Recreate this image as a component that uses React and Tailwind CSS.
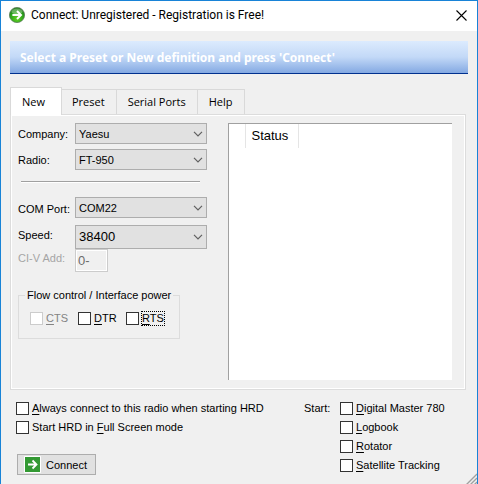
import { useState } from 'react'

const TABS = ['New', 'Preset', 'Serial Ports', 'Help']

const START_APPS = [
    { key: 'D', rest: 'igital Master 780' },
    { key: 'L', rest: 'ogbook' },
    { key: 'R', rest: 'otator' },
    { key: 'S', rest: 'atellite Tracking' },
]

function Select({ id, options, className }) {
    return (
        <div className="relative">
            <select
                id={id}
                className={`block w-full appearance-none border border-[#adadad] bg-[#e1e1e1] pl-[3px] pr-5 outline-none ${className}`}
            >
                {options.map(o => <option key={o}>{o}</option>)}
            </select>
            <svg className="pointer-events-none absolute right-1 top-1/2 -translate-y-1/2" width="10" height="6" viewBox="0 0 10 6" fill="none" stroke="#606060" strokeWidth="1.2">
                <path d="M1 0.8 L5 4.8 L9 0.8" />
            </svg>
        </div>
    )
}

function Check({ before = '', hotkey, after, disabled, focused }) {
    return (
        <label className={`flex h-[15px] items-center gap-0.5 whitespace-nowrap ${disabled ? 'text-[#838383]' : ''}`}>
            <input
                type="checkbox"
                disabled={disabled}
                className={`size-[13px] shrink-0 appearance-none border bg-white checked:bg-[#333333] ${disabled ? 'border-[#cccccc]' : 'border-[#333333]'}`}
            />
            <span className={`border border-dotted leading-[13px] ${focused ? 'border-black' : 'border-transparent'}`}>
                {before}<span className="underline underline-offset-2">{hotkey}</span>{after}
            </span>
        </label>
    )
}

export default function App() {
    const [tab, setTab] = useState('New')

    return (
        <div className="relative border border-[#1883d7] bg-[#f0f0f0] font-['Liberation_Sans',sans-serif] text-[11px] leading-[14px] text-black">
            {/* Title bar */}
            <div className="flex h-[30px] items-center bg-white pb-0.5 pl-2 pr-2.5">
                <svg width="16" height="16" viewBox="0 0 16 16">
                    <defs>
                        <radialGradient id="orb" cx="50%" cy="75%" r="75%">
                            <stop offset="0" stopColor="#5fd023" />
                            <stop offset="0.6" stopColor="#2ba01c" />
                            <stop offset="1" stopColor="#197315" />
                        </radialGradient>
                    </defs>
                    <circle cx="8" cy="8" r="7.6" fill="url(#orb)" stroke="#5d7f5a" strokeWidth="0.8" />
                    <ellipse cx="8" cy="4.5" rx="5.5" ry="3" fill="#ffffff" opacity="0.3" />
                    <path d="M3.4 8 H11.6 M8 4 L12 8 L8 12" fill="none" stroke="#ffffff" strokeWidth="2" />
                </svg>
                <h1 className="ml-1.5 flex-1 font-['Roboto',sans-serif] text-[12px]">Connect: Unregistered - Registration is Free!</h1>
                <button aria-label="Close">
                    <svg width="11" height="11" viewBox="0 0 11 11" stroke="#000000" strokeWidth="1.1">
                        <path d="M0.5 0.5 L10.5 10.5 M10.5 0.5 L0.5 10.5" />
                    </svg>
                </button>
            </div>

            <div className="px-[9px] pt-2.5">
                <div className="flex h-[33px] items-center border-b border-[#00308f] bg-gradient-to-b from-[#dcebfe] via-[#c3d9f7] to-[#84a9e2] px-2.5 pt-0.5 font-['Noto_Sans',sans-serif] text-[12px] font-bold text-white">
                    Select a Preset or New definition and press 'Connect'
                </div>

                {/* Tabs */}
                <div className="mr-0.5 mt-[13px] flex h-[27px] items-end font-['Open_Sans',sans-serif]">
                    {TABS.map(t => (
                        <button
                            key={t}
                            onClick={() => setTab(t)}
                            className={t === tab
                                ? 'relative -mb-px -mr-px h-7 border border-b-0 border-[#d9d9d9] bg-white pl-[11px] pr-4'
                                : 'h-[25px] border border-b-0 border-l-0 border-[#d9d9d9] px-[11px]'}
                        >
                            {t}
                        </button>
                    ))}
                </div>

                <div className="mr-0.5 border border-[#dcdcdc]">
                    <div className="flex border border-white pb-2 pl-1.5 pr-3 pt-[7px]">
                        <div className="w-[210px] shrink-0">
                            <div className="grid grid-cols-[57px_132px] gap-y-[5px]">
                                <label htmlFor="company" className="pt-1">Company:</label>
                                <Select id="company" options={['Yaesu', 'Icom', 'Kenwood']} className="h-[21px]" />
                                <label htmlFor="radio" className="pt-1">Radio:</label>
                                <Select id="radio" options={['FT-950', 'FT-2000']} className="h-[21px]" />
                            </div>

                            <hr className="ml-[3px] mt-[11px] w-[179px] border-b border-t border-b-white border-t-[#a0a0a0]" />

                            <div className="mt-3.5 grid grid-cols-[57px_132px]">
                                <label htmlFor="port" className="pt-[5px]">COM Port:</label>
                                <Select id="port" options={['COM22', 'COM1']} className="h-[21px]" />
                                <label htmlFor="speed" className="pt-2.5">Speed:</label>
                                <div className="pt-[7px]">
                                    <Select id="speed" options={['38400', '19200', '9600']} className="h-6 text-[13px]" />
                                </div>
                                <label htmlFor="civ" className="pt-0.5 text-[#a5a5a5]">CI-V Add:</label>
                                <input
                                    id="civ"
                                    defaultValue="0-"
                                    disabled
                                    className="h-[23px] w-[33px] border border-[#cccccc] bg-[#f0f0f0] pl-0.5 text-[13px] text-[#6d6d6d] shadow-[inset_0_0_0_1px_#ffffff]"
                                />
                            </div>

                            <fieldset className="mt-4 h-[51px] w-[162px] border border-[#dcdcdc] pl-[11px]">
                                <legend className="-ml-[5px] whitespace-nowrap px-0.5">Flow control / Interface power</legend>
                                <div className="flex pt-[9px]">
                                    <div className="w-12"><Check hotkey="C" after="TS" disabled /></div>
                                    <div className="w-12"><Check hotkey="D" after="TR" /></div>
                                    <div className="w-12"><Check hotkey="R" after="TS" focused /></div>
                                </div>
                            </fieldset>
                        </div>

                        {/* Status list */}
                        <div className="min-h-[257px] flex-1 border-l border-t border-[#a0a0a0] bg-white">
                            <table className="text-[13px]">
                                <thead>
                                    <tr className="h-6">
                                        <th className="w-4 border-r border-[#e5e5e5]"></th>
                                        <th className="w-[53px] border-r border-[#e5e5e5] pl-1.5 text-left font-normal">Status</th>
                                    </tr>
                                </thead>
                            </table>
                        </div>
                    </div>
                </div>
            </div>

            <div className="flex justify-between pb-2.5 pl-[15px] pt-[11px]">
                <div>
                    <div className="space-y-1">
                        <Check hotkey="A" after="lways connect to this radio when starting HRD" />
                        <Check before="Start HRD in " hotkey="F" after="ull Screen mode" />
                    </div>
                    <button className="ml-px mt-[19px] flex h-[21px] w-[79px] items-center gap-[5px] border border-[#adadad] bg-[#e1e1e1] pl-1.5">
                        <svg width="17" height="17" viewBox="0 0 17 17">
                            <rect width="17" height="17" rx="1" fill="#ffffff" />
                            <rect x="1" y="1" width="15" height="15" fill="#339933" />
                            <path d="M4 8.5 H12 M8.5 4.5 L12.5 8.5 L8.5 12.5" fill="none" stroke="#ffffff" strokeWidth="1.8" />
                        </svg>
                        Connect
                    </button>
                </div>
                <div className="flex w-[173px]">
                    <span className="w-9">Start:</span>
                    <div className="space-y-1">
                        {START_APPS.map(a => <Check key={a.key} hotkey={a.key} after={a.rest} />)}
                    </div>
                </div>
            </div>

            {/* Resize grip */}
            <svg className="absolute bottom-0 right-0" width="12" height="12" viewBox="0 0 12 12" stroke="#a0a0a0" strokeWidth="1.4">
                <path d="M1 12 L12 1 M5 12 L12 5 M9 12 L12 9" />
            </svg>
        </div>
    )
}
